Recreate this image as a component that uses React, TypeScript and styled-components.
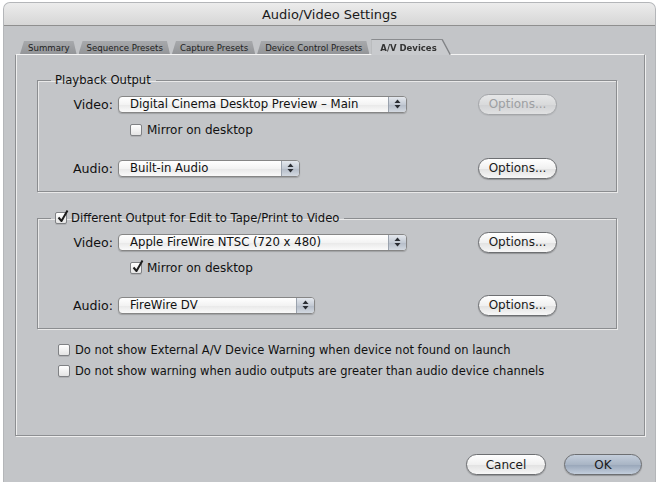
import styled, { createGlobalStyle, css } from 'styled-components'

const GlobalStyle = createGlobalStyle`
  html, body {
    margin: 0;
    padding: 0;
    background: #ffffff;
  }
  body {
    font-family: "DejaVu Sans", "Noto Sans", sans-serif;
    color: #111;
  }
`

const Window = styled.div`
  width: 651px;
  height: 479px;
  margin: 3px 0 0 4px;
  background: #c3c5c8;
  border-radius: 6px 6px 0 0;
  box-shadow: 0 0 0 1px #b4b6b9;
  display: flex;
  flex-direction: column;
  overflow: hidden;
`

const TitleBar = styled.div`
  height: 22px;
  flex-shrink: 0;
  display: flex;
  align-items: center;
  justify-content: center;
  font-size: 13px;
  color: #1a1a1a;
  background: linear-gradient(#ececec, #d6d6d6);
  border-bottom: 1px solid #8f8f8f;
`

const Body = styled.div`
  display: flex;
  flex-direction: column;
  padding: 14px 10px 0 11px;
  flex: 1;
`

const TabBar = styled.div`
  display: flex;
  align-items: flex-end;
  height: 14px;
  padding-left: 5px;
  gap: 2px;
`

const TabShape = styled.div<{ $active?: boolean }>`
  ${(p) =>
    p.$active &&
    css`
      filter: drop-shadow(1px 0 0 #7d7f82) drop-shadow(0 -1px 0 #8a8c8f);
      margin-bottom: -1px;
      position: relative;
      z-index: 1;
    `}
`

const Tab = styled.div<{ $active?: boolean }>`
  height: ${(p) => (p.$active ? 15 : 13)}px;
  padding: 0 ${(p) => (p.$active ? 13 : 7)}px 0 ${(p) => (p.$active ? 9 : 8)}px;
  display: flex;
  align-items: center;
  font-size: ${(p) => (p.$active ? 8.5 : 8.6)}px;
  font-weight: ${(p) => (p.$active ? 700 : 400)};
  color: ${(p) => (p.$active ? '#333' : '#1e1e1e')};
  background: ${(p) =>
    p.$active ? '#c8cacd' : 'linear-gradient(#a7a9ac, #939598)'};
  clip-path: ${(p) =>
    p.$active
      ? 'polygon(0 0, calc(100% - 8px) 0, 100% 100%, 0 100%)'
      : 'polygon(4px 0, calc(100% - 3px) 0, 100% 100%, 0 100%)'};
  white-space: nowrap;
`

const Pane = styled.div`
  box-sizing: border-box;
  height: 382px;
  border: 1px solid #8d8f92;
  border-top-color: #f4f4f4;
  box-shadow: inset 1px 0 0 #eeeeee, 1px 1px 0 #eeeeee;
  background: #c3c5c8;
  padding: 17px 27px 0 21px;
  display: flex;
  flex-direction: column;
`

const Group = styled.fieldset<{ $gapTop?: number }>`
  margin: ${(p) => p.$gapTop ?? 0}px 0 0 0;
  padding: 4px 59px 11px 0;
  border: 1px solid #8b8d90;
  box-shadow: inset 1px 1px 0 #e9e9e9, 1px 1px 0 #e9e9e9;
  min-width: 0;
  display: flex;
  flex-direction: column;
`

const Legend = styled.legend`
  margin-left: 13px;
  padding: 0 5px 0 4px;
  font-size: 11.6px;
  line-height: 16px;
  display: flex;
  align-items: center;
  gap: 4px;
`

const Row = styled.div<{ $mt?: number }>`
  display: flex;
  align-items: center;
  height: 24px;
  margin-top: ${(p) => p.$mt ?? 0}px;
`

const Label = styled.span`
  width: 80px;
  padding-right: 5px;
  box-sizing: border-box;
  text-align: right;
  font-size: 12.6px;
`

const Popup = styled.div<{ $w: number }>`
  width: ${(p) => p.$w}px;
  height: 17px;
  box-sizing: border-box;
  border: 1px solid #868686;
  border-radius: 4px;
  display: flex;
  overflow: hidden;
  background: linear-gradient(#ffffff, #f3f3f3 50%, #e8e8e8 51%, #fafafa);
  box-shadow: 0 1px 1px rgba(0, 0, 0, 0.18);
`

const PopupText = styled.span`
  flex: 1;
  padding-left: 11px;
  font-size: 11.7px;
  line-height: 15px;
  white-space: nowrap;
`

const PopupArrows = styled.span`
  width: 17px;
  border-left: 1px solid #9aa2ad;
  background: linear-gradient(#e4e8ee, #c3cad4 50%, #b3bbc7 51%, #d3d9e1);
  display: flex;
  align-items: center;
  justify-content: center;
`

const Pill = styled.button<{ $disabled?: boolean; $default?: boolean; $w?: number }>`
  width: ${(p) => p.$w ?? 79}px;
  height: 21px;
  padding: 0;
  border-radius: 11px;
  font-family: inherit;
  font-size: 12px;
  color: ${(p) => (p.$disabled ? '#9d9fa2' : '#1a1a1a')};
  border: 1px solid ${(p) => (p.$disabled ? '#a3a5a8' : '#6d6f72')};
  background: ${(p) =>
    p.$default
      ? 'linear-gradient(#c4cedb, #a9b5c5 50%, #97a5b8 51%, #c3cedc)'
      : p.$disabled
      ? 'linear-gradient(#e6e7e8, #d9dadb 50%, #d0d1d3 51%, #e0e1e2)'
      : 'linear-gradient(#ffffff, #f0f0f0 50%, #e1e1e1 51%, #f7f7f7)'};
  box-shadow: 0 1px 1px rgba(0, 0, 0, ${(p) => (p.$disabled ? 0.08 : 0.25)});
`

const OptionsButton = styled(Pill)`
  margin-left: auto;
`

const CheckRow = styled.label<{ $indent?: number; $mt?: number; $size?: number }>`
  display: flex;
  align-items: center;
  gap: 5px;
  height: 20px;
  padding-left: ${(p) => p.$indent ?? 0}px;
  margin-top: ${(p) => p.$mt ?? 0}px;
  font-size: ${(p) => p.$size ?? 12}px;
  white-space: nowrap;
`

const BoxWrap = styled.span`
  width: 10px;
  height: 10px;
  border: 1px solid #7f8184;
  border-radius: 2px;
  background: linear-gradient(#ffffff, #e4e4e4);
  position: relative;
  flex-shrink: 0;
  box-shadow: 0 1px 0 rgba(0, 0, 0, 0.1);
`

const Tick = styled.svg`
  position: absolute;
  left: 1px;
  top: -4px;
`

const Notes = styled.div`
  display: flex;
  flex-direction: column;
  padding-left: 21px;
  margin-top: 11px;
  gap: 1px;
`

const Footer = styled.div`
  display: flex;
  justify-content: flex-end;
  gap: 18px;
  padding: 18px 3px 0 0;
`

function Check({ checked }: { checked?: boolean }) {
  return (
    <BoxWrap>
      {checked && (
        <Tick width="12" height="14" viewBox="0 0 12 14">
          <path d="M1.5 8.5 L4.5 12 L10.5 1.5" fill="none" stroke="#1d1d1d" strokeWidth="2" strokeLinejoin="round" />
        </Tick>
      )}
    </BoxWrap>
  )
}

function PopupButton({ text, width }: { text: string; width: number }) {
  return (
    <Popup $w={width}>
      <PopupText>{text}</PopupText>
      <PopupArrows>
        <svg width="7" height="10" viewBox="0 0 7 10">
          <path d="M3.5 0.5 L6.5 4 L0.5 4 Z" fill="#2a2d33" />
          <path d="M3.5 9.5 L6.5 6 L0.5 6 Z" fill="#2a2d33" />
        </svg>
      </PopupArrows>
    </Popup>
  )
}

const tabs = ['Summary', 'Sequence Presets', 'Capture Presets', 'Device Control Presets']

export default function App() {
  return (
    <>
      <GlobalStyle />
      <Window>
        <TitleBar>Audio/Video Settings</TitleBar>
        <Body>
          <TabBar>
            {tabs.map((t) => (
              <TabShape key={t}>
                <Tab>{t}</Tab>
              </TabShape>
            ))}
            <TabShape $active>
              <Tab $active>A/V Devices</Tab>
            </TabShape>
          </TabBar>
          <Pane>
            <Group>
              <Legend>Playback Output</Legend>
              <Row>
                <Label>Video:</Label>
                <PopupButton text="Digital Cinema Desktop Preview – Main" width={289} />
                <OptionsButton $disabled>Options...</OptionsButton>
              </Row>
              <CheckRow $indent={92} $mt={4}>
                <Check />
                Mirror on desktop
              </CheckRow>
              <Row $mt={16}>
                <Label>Audio:</Label>
                <PopupButton text="Built-in Audio" width={182} />
                <OptionsButton>Options...</OptionsButton>
              </Row>
            </Group>
            <Group $gapTop={18}>
              <Legend>
                <Check checked />
                Different Output for Edit to Tape/Print to Video
              </Legend>
              <Row>
                <Label>Video:</Label>
                <PopupButton text="Apple FireWire NTSC (720 x 480)" width={289} />
                <OptionsButton>Options...</OptionsButton>
              </Row>
              <CheckRow $indent={92} $mt={4}>
                <Check checked />
                Mirror on desktop
              </CheckRow>
              <Row $mt={15}>
                <Label>Audio:</Label>
                <PopupButton text="FireWire DV" width={197} />
                <OptionsButton>Options...</OptionsButton>
              </Row>
            </Group>
            <Notes>
              <CheckRow $size={11.5}>
                <Check />
                Do not show External A/V Device Warning when device not found on launch
              </CheckRow>
              <CheckRow $size={11.5}>
                <Check />
                Do not show warning when audio outputs are greater than audio device channels
              </CheckRow>
            </Notes>
          </Pane>
          <Footer>
            <Pill $w={80}>Cancel</Pill>
            <Pill $w={78} $default>OK</Pill>
          </Footer>
        </Body>
      </Window>
    </>
  )
}
